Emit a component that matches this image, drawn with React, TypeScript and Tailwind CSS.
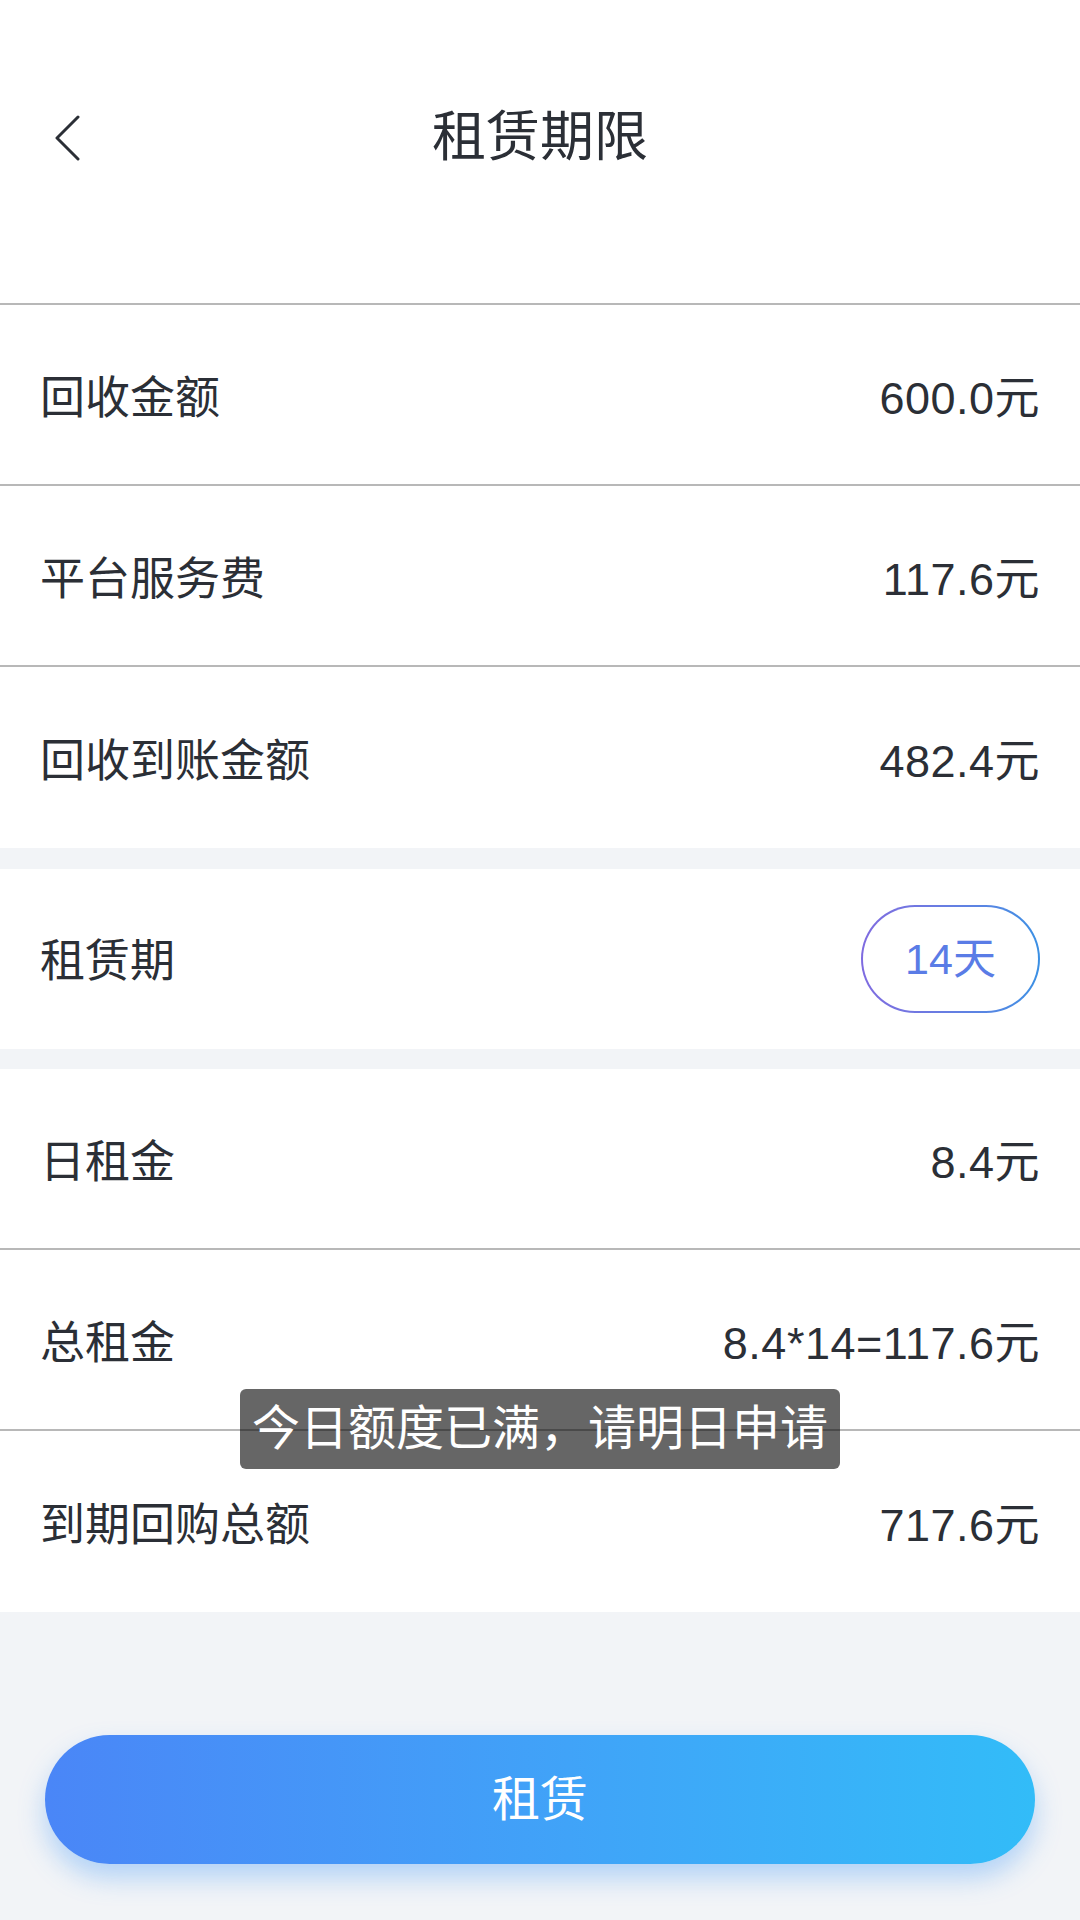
import React from "react"

const font = { fontFamily: '"Liberation Sans", "Noto Sans CJK SC", sans-serif' }

type Row = { label: string; value: string }

const topRows: Row[] = [
  { label: "回收金额", value: "600.0元" },
  { label: "平台服务费", value: "117.6元" },
  { label: "回收到账金额", value: "482.4元" },
]

const bottomRows: Row[] = [
  { label: "日租金", value: "8.4元" },
  { label: "总租金", value: "8.4*14=117.6元" },
  { label: "到期回购总额", value: "717.6元" },
]

function InfoRow({ row, last }: { row: Row; last: boolean }) {
  return (
    <div
      className={
        "flex h-[181px] items-center justify-between bg-white px-[40px] pt-[8px] text-[45px] text-[#2b2f36] " +
        (last ? "" : "border-b-2 border-[#b8b8b8]")
      }
    >
      <span>{row.label}</span>
      <span className="tracking-[0.5px]">{row.value}</span>
    </div>
  )
}

export default function App() {
  return (
    <div className="relative min-h-[1920px] w-[1080px] bg-[#f2f4f7]" style={font}>
      {/* header */}
      <div className="h-[305px] border-b-2 border-[#b8b8b8] bg-white">
        <div className="relative flex h-[274px] items-center justify-center">
          <button className="absolute left-[54px] top-[115px] flex h-[46px] w-[26px] items-center">
            <svg width="26" height="46" viewBox="0 0 26 46" fill="none">
              <polyline points="24,2 3,23 24,44" stroke="#2b2f36" strokeWidth="3" strokeLinecap="round" strokeLinejoin="round" />
            </svg>
          </button>
          <h1 className="text-[54px] text-[#2b2f36]">租赁期限</h1>
        </div>
      </div>

      {topRows.map((r, i) => (
        <InfoRow key={r.label} row={r} last={i === topRows.length - 1} />
      ))}

      <div className="mt-[21px] flex h-[180px] items-center justify-between bg-white px-[40px] text-[45px] text-[#2b2f36]">
        <span className="pt-[6px]">租赁期</span>
        <div className="rounded-full bg-gradient-to-r from-[#7f6be0] to-[#3a90e4] p-[2px]">
          <div className="flex h-[104px] w-[175px] items-center justify-center rounded-full bg-white text-[43px] text-[#5a7ce6]">
            14天
          </div>
        </div>
      </div>

      <div className="mt-[20px]">
        {bottomRows.map((r, i) => (
          <InfoRow key={r.label} row={r} last={i === bottomRows.length - 1} />
        ))}
      </div>

      <div className="px-[45px] pt-[123px]">
        <button className="flex h-[129px] w-full items-center justify-center rounded-full bg-gradient-to-r from-[#4a86f7] to-[#32bcf8] text-[48px] text-white shadow-[0_14px_26px_rgba(60,150,245,0.35)]">
          租赁
        </button>
      </div>

      {/* toast */}
      <div className="absolute left-1/2 top-[1389px] flex h-[80px] w-[600px] -translate-x-1/2 items-center justify-center rounded-[6px] bg-black/60 text-[48px] text-white">
        今日额度已满，请明日申请
      </div>
    </div>
  )
}
